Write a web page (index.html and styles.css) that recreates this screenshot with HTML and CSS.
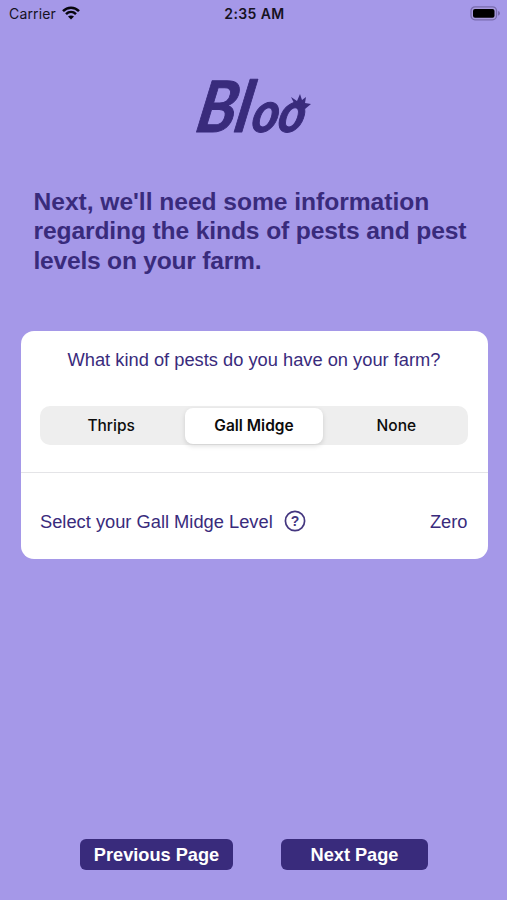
FILE: index.html
```html
<!DOCTYPE html>
<html lang="en">
<head>
<meta charset="utf-8">
<title>Bloo</title>
<link rel="stylesheet" href="styles.css">
</head>
<body>
<div class="screen">
  <header class="status">
    <div class="carrier"><span>Carrier</span>
      <svg width="18" height="14" viewBox="0 0 18 14" fill="none" stroke="#08060d" stroke-width="2.5"><path d="M1 5.1C5.5.5 12.500.5 17 5.100M4 8.200C6.900 5.400 11.100 5.400 14 8.200"/><path d="M9 13.500L6 10.500C7.700 9 10.300 9 12 10.500Z" fill="#08060d" stroke="none"/></svg>
    </div>
    <div class="clock">2:35 AM</div>
    <svg class="battery" width="31" height="15" viewBox="0 0 31 15"><rect x="1" y=".8" width="25.500" height="13" rx="4" fill="#a99bdf" stroke="#786bae" stroke-width="1.300"/><rect x="3" y="2.900" width="21.500" height="8.800" rx="2" fill="#000"/><path d="M28 5Q30 5.500 30 7.300T28 9.700Z" fill="#786bae"/></svg>
  </header>
  <svg class="logo" width="120" height="62" viewBox="0 0 120 62">
    <g transform="translate(0 57) skewX(-11) scale(.9 1)"><text class="wordmark"><tspan x="0">B</tspan><tspan x="43">l</tspan><tspan class="small" x="62 91">oo</tspan></text></g>
    <path d="M97 31L100 28L97 22L103 26L106 19L108 25L112 22L111 28L117 29L111 34L107 29Z" fill="#392b7c"/>
  </svg>
  <h1><span>Next, we'll need some information</span><br><span class="tight">regarding the kinds of pests and pest</span><br><span class="tight">levels on your farm.</span></h1>
  <main class="card">
    <section class="pests">
      <p>What kind of pests do you have on your farm?</p>
      <div class="segments"><span>Thrips</span><span class="selected">Gall Midge</span><span>None</span></div>
    </section>
    <section class="level">
      <span class="label">Select your Gall Midge Level</span>
      <svg width="22" height="22" viewBox="0 0 22 22"><circle cx="11" cy="11" r="9.600" fill="none" stroke="#44367f" stroke-width="1.700"/><text class="help" x="11" y="16" text-anchor="middle">?</text></svg>
      <span class="value">Zero</span>
    </section>
  </main>
  <footer><button class="prev">Previous Page</button><button class="next">Next Page</button></footer>
</div>
</body>
</html>
```
FILE: styles.css
```css
* { box-sizing: border-box; }
body { margin: 0; background: #a598e8; }
.screen { width: 507px; height: 900px; display: flex; flex-direction: column; font-family: "Liberation Sans", sans-serif; color: #392b7c; overflow: hidden; }
.status { height: 28px; display: grid; grid-template-columns: 1fr auto 1fr; align-items: center; padding: 0 6px 0 9px; font: 14px/28px Inter, sans-serif; color: #16121f; }
.carrier { display: flex; align-items: center; gap: 6px; letter-spacing: .15px; }
.carrier svg { margin-top: -2px; }
.clock { font-weight: 600; letter-spacing: .4px; margin-left: -1px; }
.battery { justify-self: end; margin-top: -1px; }
.logo { margin: 47px 0 0 194px; flex: none; overflow: visible; }
.wordmark { font: italic 700 71px Lato, sans-serif; fill: #392b7c; stroke: #392b7c; stroke-width: 1px; stroke-linejoin: round; }
.small { font-size: 57px; }
h1 { margin: 50px 0 0 33.500px; font-size: 24.6px; line-height: 29.3px; font-weight: 700; white-space: nowrap; letter-spacing: -.03px; }
.tight { letter-spacing: -.12px; }
.tight:last-child { letter-spacing: -.23px; }
.card { margin: 56px 19.500px 0 20.500px; height: 228px; background: #fff; border-radius: 13px; flex: none; }
.pests { height: 142.500px; padding: 18px 19.500px 0; border-bottom: 1px solid #e4e4e7; }
.pests p { margin: 0; font-size: 18.300px; line-height: 22px; text-align: center; white-space: nowrap; }
.segments { display: grid; grid-template-columns: repeat(3, 1fr); height: 39px; margin-top: 35px; padding: 2px; background: #eee; border-radius: 10px; font: 500 15.500px/36px Inter, sans-serif; color: #0c0c0c; text-align: center; }
.segments span:first-child { padding-right: 3px; }
.segments span:last-child { padding-left: 2px; }
.selected { background: #fff; border-radius: 8px; margin: 0 2px; font-weight: 600; box-shadow: 0 2px 5px #0002; }
.level { height: 85.500px; display: flex; align-items: center; padding: 11px 20px 0 19.500px; font-size: 18.300px; }
.level svg { margin-left: 11px; margin-top: -1px; }
.help { font: 700 14px "Liberation Sans", sans-serif; fill: #44367f; }
.value { margin-left: auto; }
footer { margin: auto 0 30px 80px; display: flex; gap: 48px; }
button { height: 31px; border: 0; border-radius: 6px; padding: 2px 0 0; background: #392b7c; color: #fff; font: 700 18.200px "Liberation Sans", sans-serif; white-space: nowrap; }
.prev { width: 153px; }
.next { width: 147px; }
```
